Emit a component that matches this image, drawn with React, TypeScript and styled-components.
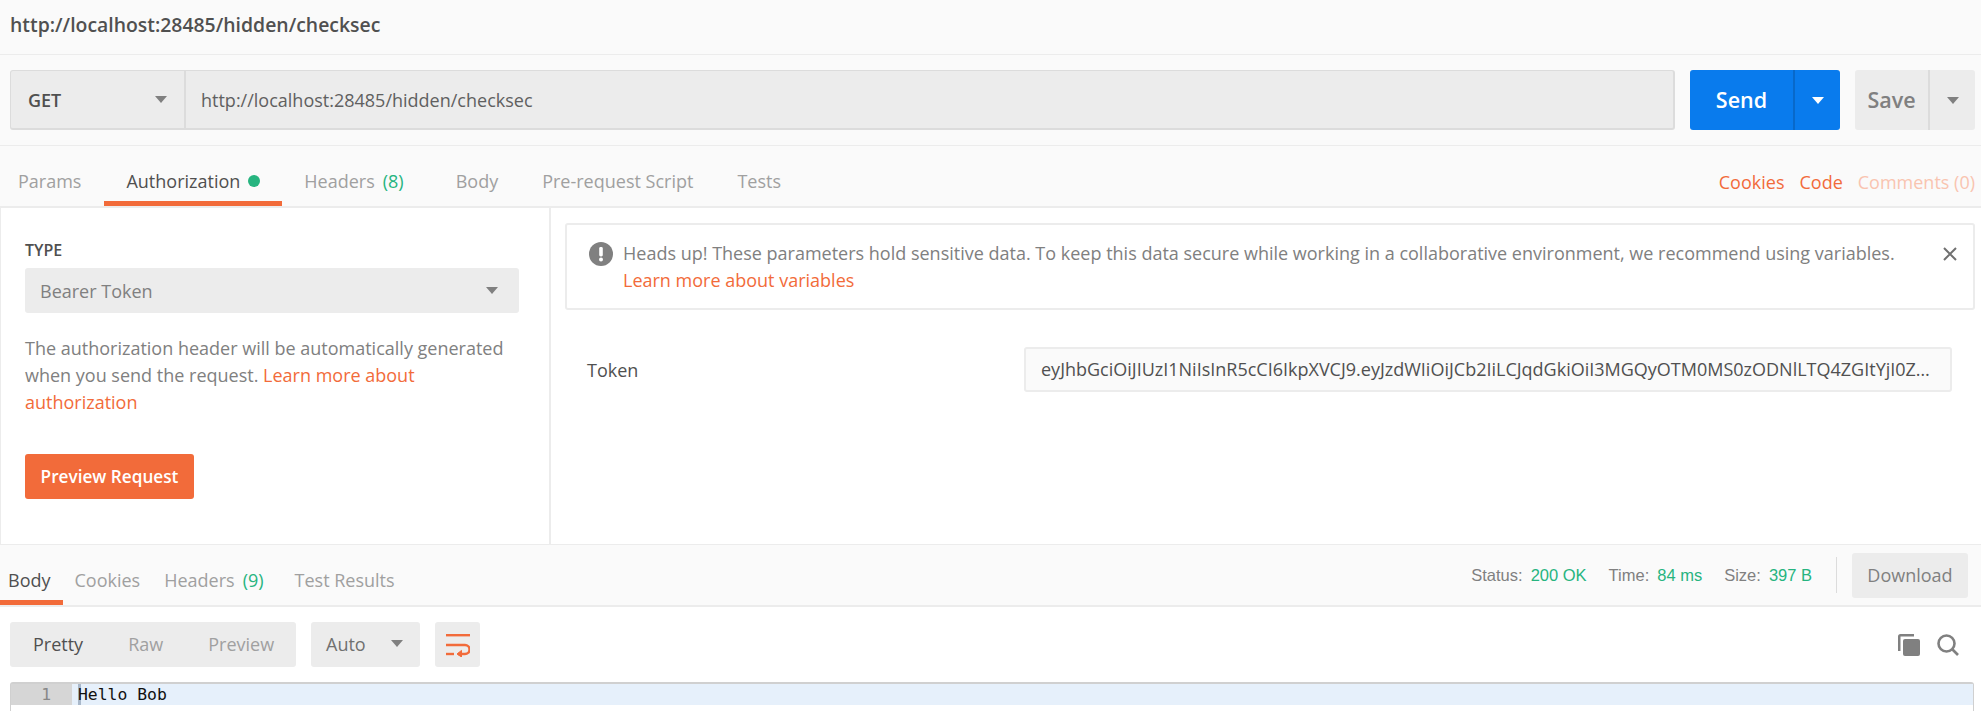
import React from "react";
import styled, { createGlobalStyle } from "styled-components";

const ORANGE = "#f26b3a";
const GREEN = "#26b47f";

const GlobalStyle = createGlobalStyle`
  html, body {
    margin: 0;
    height: 100%;
    overflow: hidden;
    background: #fff;
  }
  * {
    box-sizing: border-box;
  }
`;

const Page = styled.div`
  width: 1981px;
  height: 711px;
  display: flex;
  flex-direction: column;
  overflow: hidden;
  font-family: "Open Sans", sans-serif;
  font-size: 18px;
  color: #505050;
  background: #fff;
`;

const TitleBar = styled.div`
  height: 55px;
  flex: none;
  display: flex;
  align-items: center;
  padding: 0 0 5px 10px;
  background: #fafafa;
  border-bottom: 1px solid #ececec;
  font-size: 19.4px;
  font-weight: 600;
  color: #505050;
`;

const RequestBar = styled.div`
  height: 91px;
  flex: none;
  display: flex;
  align-items: flex-start;
  padding: 15px 6px 0 10px;
  background: #fafafa;
  border-bottom: 1px solid #ececec;
`;

const UrlGroup = styled.div`
  width: 1665px;
  height: 60px;
  display: flex;
  background: #ececec;
  border: 2px solid #dcdcdc;
  border-top-width: 1px;
  border-left-width: 1px;
  border-radius: 3px;
`;

const MethodSelect = styled.div`
  width: 175px;
  flex: none;
  display: flex;
  align-items: center;
  justify-content: space-between;
  padding: 0 17px 0 17px;
  border-right: 2px solid #dcdcdc;
  font-weight: 600;
  color: #505050;
`;

const UrlText = styled.div`
  display: flex;
  align-items: center;
  padding-left: 15px;
  font-size: 18px;
  color: #606060;
`;

const SplitButton = styled.div<{ $primary?: boolean; $width: number; $gap: number }>`
  width: ${(p) => p.$width}px;
  height: 60px;
  flex: none;
  margin-left: ${(p) => p.$gap}px;
  display: flex;
  border-radius: 3px;
  font-size: 21.5px;
  font-weight: 600;
  background: ${(p) => (p.$primary ? "#097bed" : "#ececec")};
  color: ${(p) => (p.$primary ? "#fff" : "#808080")};
`;

const SplitLabel = styled.div<{ $primary?: boolean }>`
  flex: 1;
  display: flex;
  align-items: center;
  justify-content: center;
  padding-bottom: 2px;
  border-right: 2px solid ${(p) => (p.$primary ? "#0869ca" : "#dcdcdc")};
`;

const SplitCaret = styled.div<{ $width: number }>`
  width: ${(p) => p.$width}px;
  flex: none;
  display: flex;
  align-items: center;
  justify-content: center;
`;

const Caret = styled.span<{ $color?: string; $size?: number }>`
  display: inline-block;
  width: 0;
  height: 0;
  flex: none;
  border-left: ${(p) => p.$size ?? 6}px solid transparent;
  border-right: ${(p) => p.$size ?? 6}px solid transparent;
  border-top: ${(p) => (p.$size ?? 6) + 1}px solid ${(p) => p.$color ?? "#808080"};
`;

const TabBar = styled.div<{ $height: number }>`
  height: ${(p) => p.$height}px;
  flex: none;
  display: flex;
  align-items: stretch;
  background: #fafafa;
  border-bottom: 2px solid #ececec;
`;

const Tab = styled.div<{ $active?: boolean; $pad: number; $firstPad?: number; $extra?: number }>`
  display: flex;
  align-items: center;
  padding: 14px ${(p) => p.$pad}px 0;
  margin-right: ${(p) => p.$extra ?? 0}px;
  color: ${(p) => (p.$active ? "#505050" : "#a0a0a0")};
  border-bottom: 5px solid ${(p) => (p.$active ? ORANGE : "transparent")};
  white-space: nowrap;

  &:first-child {
    padding-left: ${(p) => p.$firstPad ?? p.$pad}px;
  }
`;

const Dot = styled.span`
  width: 12px;
  height: 12px;
  margin-left: 8px;
  border-radius: 50%;
  background: ${GREEN};
`;

const Count = styled.span`
  margin-left: 8px;
  color: ${GREEN};
`;

const TabLinks = styled.div`
  margin-left: auto;
  display: flex;
  align-items: center;
  gap: 15px;
  padding: 11px 6px 0 0;
`;

const TabLink = styled.span<{ $muted?: boolean }>`
  color: ${(p) => (p.$muted ? "#f9c4b0" : ORANGE)};
`;

const AuthArea = styled.div`
  height: 337px;
  flex: none;
  display: flex;
  border-left: 1px solid #ececec;
  border-bottom: 1px solid #ececec;
`;

const AuthSide = styled.div`
  width: 550px;
  flex: none;
  padding: 31px 30px 0 24px;
  border-right: 2px solid #ececec;
`;

const SideLabel = styled.div`
  height: 29px;
  font-size: 16px;
  font-weight: 600;
  color: #505050;
`;

const TypeSelect = styled.div`
  width: 494px;
  height: 45px;
  display: flex;
  align-items: center;
  justify-content: space-between;
  padding: 0 21px 0 15px;
  border-radius: 3px;
  background: #ececec;
  color: #808080;
`;

const HelpText = styled.p`
  margin: 22px 0 0;
  line-height: 27px;
  color: #808080;
`;

const OrangeLink = styled.span`
  color: ${ORANGE};
`;

const PreviewButton = styled.div`
  width: 169px;
  height: 45px;
  margin-top: 38px;
  display: flex;
  align-items: center;
  justify-content: center;
  border-radius: 3px;
  background: ${ORANGE};
  color: #fff;
  font-weight: 600;
  font-size: 17.2px;
`;

const AuthMain = styled.div`
  flex: 1;
  min-width: 0;
  padding: 15px 6px 0 14px;
`;

const Alert = styled.div`
  height: 87px;
  display: flex;
  align-items: flex-start;
  padding: 15px 0 0 22px;
  border: 2px solid #ececec;
  border-radius: 3px;
  line-height: 27px;
  color: #808080;
`;

const AlertIcon = styled.svg`
  width: 24px;
  height: 24px;
  flex: none;
  margin: 2px 10px 0 0;
`;

const AlertBody = styled.div`
  flex: 1;
`;

const CloseIcon = styled.svg`
  width: 16px;
  height: 16px;
  flex: none;
  margin: 6px 15px 0 0;
`;

const TokenRow = styled.div`
  margin-top: 37px;
  display: flex;
  align-items: center;
`;

const TokenLabel = styled.div`
  width: 459px;
  flex: none;
  padding-left: 22px;
  color: #505050;
`;

const TokenInput = styled.div`
  width: 928px;
  height: 45px;
  padding: 0 20px 0 15px;
  line-height: 41px;
  font-size: 18px;
  background: #fafafa;
  border: 2px solid #ececec;
  border-radius: 3px;
  color: #505050;
  overflow: hidden;
  white-space: nowrap;
  text-overflow: ellipsis;
`;

const ResponseBar = styled(TabBar)`
  justify-content: space-between;
`;

const TabGroup = styled.div`
  display: flex;
  align-items: stretch;
`;

const ResponseMeta = styled.div`
  display: flex;
  align-items: center;
  padding: 0 13px 0 0;
  font-family: "Liberation Sans", Arial, sans-serif;
  font-size: 16.5px;
`;

const MetaLabel = styled.span`
  color: #808080;
  margin-right: 8px;
`;

const MetaValue = styled.span`
  color: ${GREEN};
  margin-right: 22px;
`;

const MetaDivider = styled.span`
  width: 1px;
  height: 36px;
  margin: 0 15px 0 2px;
  background: #dcdcdc;
`;

const DownloadButton = styled.div`
  width: 116px;
  height: 45px;
  display: flex;
  align-items: center;
  justify-content: center;
  border-radius: 3px;
  background: #ececec;
  color: #808080;
  font-family: "Open Sans", sans-serif;
  font-size: 18px;
`;

const ViewBar = styled.div`
  height: 75px;
  flex: none;
  display: flex;
  align-items: flex-start;
  padding: 15px 22px 0 10px;
`;

const ViewGroup = styled.div`
  width: 286px;
  height: 45px;
  display: flex;
  align-items: center;
  padding: 0 0 2px 23px;
  border-radius: 3px;
  background: #ececec;
`;

const ViewOption = styled.span<{ $active?: boolean; $gap?: number }>`
  margin-right: ${(p) => p.$gap ?? 0}px;
  color: ${(p) => (p.$active ? "#505050" : "#a0a0a0")};
`;

const AutoSelect = styled.div`
  width: 109px;
  height: 45px;
  margin-left: 15px;
  display: flex;
  align-items: center;
  justify-content: space-between;
  padding: 0 17px 2px 15px;
  border-radius: 3px;
  background: #ececec;
  color: #707070;
`;

const WrapButton = styled.div`
  width: 45px;
  height: 45px;
  margin-left: 15px;
  display: flex;
  align-items: center;
  justify-content: center;
  border-radius: 3px;
  background: #ececec;
`;

const ViewTools = styled.div`
  margin-left: auto;
  height: 45px;
  display: flex;
  align-items: center;
  gap: 17px;
`;

const Editor = styled.div`
  flex: 1;
  margin: 0 7px 0 10px;
  border: 1px solid #d0d0d0;
  border-top-width: 2px;
  border-bottom: none;
  border-radius: 3px 3px 0 0;
`;

const EditorLine = styled.div`
  height: 21px;
  display: flex;
  background: #e6f0fb;
  font-family: "DejaVu Sans Mono", "Liberation Mono", monospace;
  font-size: 16.4px;
  line-height: 21px;
  color: #111;
`;

const Gutter = styled.div`
  width: 61px;
  flex: none;
  padding-right: 21px;
  text-align: right;
  background: #d6d6d6;
  color: #888;
`;

const Code = styled.div`
  padding-left: 6px;
  position: relative;

  &::before {
    content: "";
    position: absolute;
    left: 6px;
    top: 0;
    width: 3px;
    height: 21px;
    background: #a9b8ca;
  }
`;

const CodeText = styled.span`
  position: relative;
`;

export default function App() {
  return (
    <Page>
      <GlobalStyle />
      <TitleBar>http://localhost:28485/hidden/checksec</TitleBar>
      <RequestBar>
        <UrlGroup>
          <MethodSelect>
            GET
            <Caret />
          </MethodSelect>
          <UrlText>http://localhost:28485/hidden/checksec</UrlText>
        </UrlGroup>
        <SplitButton $primary $width={150} $gap={15}>
          <SplitLabel $primary>Send</SplitLabel>
          <SplitCaret $width={45}>
            <Caret $color="#fff" />
          </SplitCaret>
        </SplitButton>
        <SplitButton $width={120} $gap={15}>
          <SplitLabel>Save</SplitLabel>
          <SplitCaret $width={45}>
            <Caret />
          </SplitCaret>
        </SplitButton>
      </RequestBar>
      <TabBar $height={62}>
        <Tab $pad={22} $firstPad={18} $extra={1}>Params</Tab>
        <Tab $pad={22} $active>
          Authorization
          <Dot />
        </Tab>
        <Tab $pad={22} $extra={8}>
          Headers
          <Count>(8)</Count>
        </Tab>
        <Tab $pad={22}>Body</Tab>
        <Tab $pad={22}>Pre-request Script</Tab>
        <Tab $pad={22}>Tests</Tab>
        <TabLinks>
          <TabLink>Cookies</TabLink>
          <TabLink>Code</TabLink>
          <TabLink $muted>Comments (0)</TabLink>
        </TabLinks>
      </TabBar>
      <AuthArea>
        <AuthSide>
          <SideLabel>TYPE</SideLabel>
          <TypeSelect>
            Bearer Token
            <Caret />
          </TypeSelect>
          <HelpText>
            The authorization header will be automatically generated when you send the request.{" "}
            <OrangeLink>Learn more about authorization</OrangeLink>
          </HelpText>
          <PreviewButton>Preview Request</PreviewButton>
        </AuthSide>
        <AuthMain>
          <Alert>
            <AlertIcon viewBox="0 0 24 24">
              <circle cx="12" cy="12" r="12" fill="#808080" />
              <rect x="10.2" y="5" width="3.6" height="9.5" rx="1.4" fill="#fff" />
              <circle cx="12" cy="17.6" r="2" fill="#fff" />
            </AlertIcon>
            <AlertBody>
              Heads up! These parameters hold sensitive data. To keep this data secure while working in a
              collaborative environment, we recommend using variables.
              <br />
              <OrangeLink>Learn more about variables</OrangeLink>
            </AlertBody>
            <CloseIcon viewBox="0 0 16 16">
              <path d="M2 2l12 12M14 2L2 14" stroke="#707070" strokeWidth="2" fill="none" />
            </CloseIcon>
          </Alert>
          <TokenRow>
            <TokenLabel>Token</TokenLabel>
            <TokenInput>
              eyJhbGciOiJIUzI1NiIsInR5cCI6IkpXVCJ9.eyJzdWIiOiJCb2IiLCJqdGkiOiI3MGQyOTM0MS0zODNlLTQ4ZGItYjI0ZGM1NzQ2MTk4
            </TokenInput>
          </TokenRow>
        </AuthMain>
      </AuthArea>
      <ResponseBar $height={62}>
        <TabGroup>
          <Tab $pad={12} $firstPad={8} $active>Body</Tab>
          <Tab $pad={12}>Cookies</Tab>
          <Tab $pad={12} $extra={7}>
            Headers
            <Count>(9)</Count>
          </Tab>
          <Tab $pad={12}>Test Results</Tab>
        </TabGroup>
        <ResponseMeta>
          <MetaLabel>Status:</MetaLabel>
          <MetaValue>200 OK</MetaValue>
          <MetaLabel>Time:</MetaLabel>
          <MetaValue>84 ms</MetaValue>
          <MetaLabel>Size:</MetaLabel>
          <MetaValue>397 B</MetaValue>
          <MetaDivider />
          <DownloadButton>Download</DownloadButton>
        </ResponseMeta>
      </ResponseBar>
      <ViewBar>
        <ViewGroup>
          <ViewOption $active $gap={45}>Pretty</ViewOption>
          <ViewOption $gap={45}>Raw</ViewOption>
          <ViewOption>Preview</ViewOption>
        </ViewGroup>
        <AutoSelect>
          Auto
          <Caret />
        </AutoSelect>
        <WrapButton>
          <svg width="24" height="24" viewBox="0 0 24 24" fill="none" stroke={ORANGE} strokeWidth="2.4">
            <path d="M0 2.2h24" />
            <path d="M0 12h19c2.600 0 4.500 1.800 4.500 4.500s-1.900 4.500-4.500 4.500h-7" />
            <path d="M0 21h8" />
            <path d="M15.500 17.400L11 21l4.500 3z" fill={ORANGE} strokeWidth="1" />
          </svg>
        </WrapButton>
        <ViewTools>
          <svg width="22" height="22" viewBox="0 0 22 22" fill="#808080">
            <path d="M0 2.500A2.500 2.500 0 0 1 2.500 0H16v2.500H2.500V17H0z" />
            <rect x="5" y="5" width="17" height="17" rx="2" />
          </svg>
          <svg width="22" height="22" viewBox="0 0 22 22" fill="none" stroke="#808080" strokeWidth="2.600">
            <circle cx="9.500" cy="9.500" r="8" />
            <path d="M15 15l6 6" />
          </svg>
        </ViewTools>
      </ViewBar>
      <Editor>
        <EditorLine>
          <Gutter>1</Gutter>
          <Code>
            <CodeText>Hello Bob</CodeText>
          </Code>
        </EditorLine>
      </Editor>
    </Page>
  );
}
